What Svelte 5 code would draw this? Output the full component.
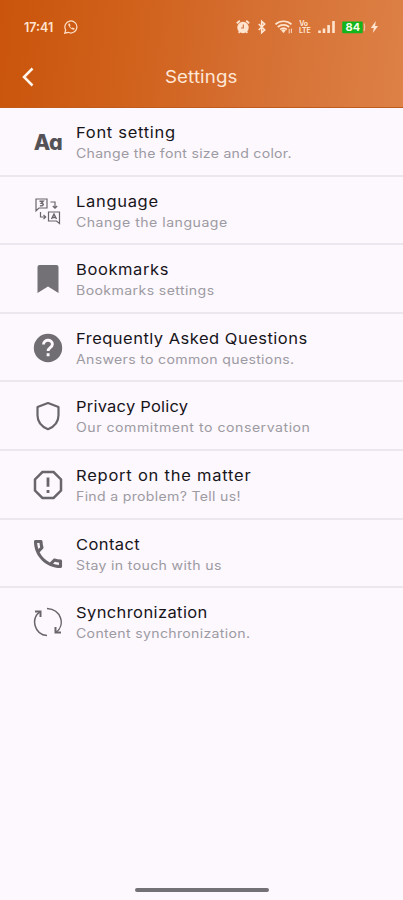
<script>
  const rows = [
    { icon: 'font', title: 'Font setting', text: 'Change the font size and color.', ts: 0.64, ss: 0.26 },
    { icon: 'language', title: 'Language', text: 'Change the language', ts: 0.62, ss: 0.46 },
    { icon: 'bookmark', title: 'Bookmarks', text: 'Bookmarks settings', ts: 0.55, ss: 0.38 },
    { icon: 'help', title: 'Frequently Asked Questions', text: 'Answers to common questions.', ts: 0.44, ss: 0.3 },
    { icon: 'shield', title: 'Privacy Policy', text: 'Our commitment to conservation', ts: 0.2, ss: 0.49 },
    { icon: 'report', title: 'Report on the matter', text: 'Find a problem? Tell us!', ts: 0.7, ss: 0.29 },
    { icon: 'phone', title: 'Contact', text: 'Stay in touch with us', ts: 0.36, ss: 0.33 },
    { icon: 'sync', title: 'Synchronization', text: 'Content synchronization.', ts: 0.36, ss: 0.3 }
  ];
</script>

<div class="screen">
  <header>
    <div class="status">
      <span class="time">17:41</span>
      <svg class="chat" width="14" height="14" viewBox="0 0 14 14" fill="none" stroke="#ffdfc8" stroke-width="1.2"><path d="M.8 13.2 1.700 10a6 6 0 1 1 2.400 2.300Z" /><path d="M4.300 3.800c-.2 2.800 3 6.100 5.800 6l.6-1.400-1.900-1-.9.800C6.900 7.800 6.200 7 5.900 6.300l.6-.8-.8-1.900Z" fill="#ffdfc8" stroke="none" /></svg>
      <div class="indicators">
        <svg width="144" height="18" viewBox="0 0 144 18" fill="none" stroke="#ffe4cf">
          <circle cx="7" cy="9.500" r="5.700" fill="#ffe4cf" stroke="none" />
          <path d="M.8 5.200 3.800 2.700M13.200 5.200l-3-2.500M2.700 14.800l1-1.200M11.300 14.800l-1-1.200" stroke-width="1.800" />
          <path d="M7.300 6.500V10H5.200" stroke="#cf6e39" stroke-width="1.100" />
          <path d="m22.700 6 6 6-3 2.700V3.300l3 2.700-6 6" stroke-width="1.600" />
          <path d="M39.500 6.300a12 12 0 0 1 16 0M41.800 9a8.500 8.500 0 0 1 11.400 0M44.200 11.500a5 5 0 0 1 6.600 0" stroke-width="1.700" />
          <path d="m45.200 12.300 2.300 3 2.300-3a3.500 3.500 0 0 0-4.600 0Z" fill="#ffe4cf" stroke="none" />
          <path d="M53.200 11v4.500M55.400 10.500V15" stroke-width=".9" />
          <path d="M83.500 15v-2.500M88 15v-4.500M92.600 15V7M97.500 15V3" stroke-width="2.600" />
          <rect x="106.200" y="3.500" width="20.500" height="11.800" rx="1" fill="#12b51c" stroke="none" />
          <path d="M128.200 5.500q1 3.500 0 7.500" stroke="#e9c29e" stroke-width="1.200" />
          <path d="m139.800 3-5 6.900h3l-1 5.200 5.300-7h-3Z" fill="#ffe4cf" stroke="none" />
          <g class="tiny"><text x="63.200" y="7.700">Vo</text><text x="63" y="15">LTE</text></g>
          <text class="battery" x="109.500" y="13.300">84</text>
        </svg>
      </div>
    </div>
    <div class="bar">
      <svg class="back" width="12" height="20" viewBox="0 0 12 20" fill="none" stroke="#fff5ec" stroke-width="2.500"><path d="M10.500 1.500 2 10l8.500 8.500" /></svg>
      <h1><span>Settings</span></h1>
    </div>
  </header>

  <main>
    {#each rows as row}
      <section>
        <div class="icon">
          {#if row.icon === 'font'}
            <span class="aa">Aa</span>
          {:else}
            <svg width="30" height="30" viewBox="0 0 30 30" fill="none" stroke="#68666b">
              {#if row.icon === 'language'}
                <g stroke-width="1.200"><path d="M3 3h11v9H6l-3 2.800ZM15.500 16h11v11.500L23.500 25h-8ZM17.500 6h4.500v6M19.800 10l2.200 2.200 2.200-2.200M7.500 16v5h5M10.500 18.800l2.200 2.200-2.200 2.200" /><path d="m18.500 23 2.500-5 2.500 5M19.400 21.500h3.200M6.500 5.300h3.700L8.300 7.300c3 0 2.600 3-1.400 2.500" stroke-width="1.400" /></g>
              {:else if row.icon === 'bookmark'}
                <path d="M4.500 3q0-2 2-2h17q2 0 2 2v26L15 22.500 4.500 29Z" fill="#737175" stroke="none" />
              {:else if row.icon === 'help'}
                <circle cx="15" cy="15" r="14.200" fill="#706e72" stroke="none" /><path d="M10.500 11.500c.2-5.800 9-5.300 8.900-.2-.1 3.500-4.300 3.200-4.300 6.700M15.100 20.200v3" stroke="#fdf7fe" stroke-width="2.900" />
              {:else if row.icon === 'shield'}
                <path d="M15 2 25.500 6v8.200C25.500 21.500 20.500 26 15 28.200 9.500 26 4.500 21.500 4.500 14.200V6Z" stroke-width="2.200" stroke-linejoin="round" />
              {:else if row.icon === 'report'}
                <path d="M9.400 2h11.200L28 9.400v11.200L20.600 28H9.400L2 20.600V9.400Z" stroke-width="2.500" /><path d="M15 7.500v9.300M15 20v3" stroke-width="2.800" />
              {:else if row.icon === 'phone'}
                <path transform="translate(-3.700 -3.700) scale(1.560)" d="M6.540 5c.06.890.210 1.760.450 2.590l-1.200 1.200c-.410-1.200-.670-2.470-.760-3.790h1.510m9.860 12.020c.850.240 1.720.390 2.600.450v1.490c-1.320-.090-2.590-.350-3.800-.750l1.200-1.190M7.500 3H4c-.550 0-1 .450-1 1 0 9.390 7.610 17 17 17 .550 0 1-.450 1-1v-3.490c0-.550-.450-1-1-1-1.240 0-2.450-.200-3.570-.570-.100-.040-.210-.050-.310-.050-.260 0-.510.100-.710.290l-2.200 2.200c-2.830-1.450-5.150-3.760-6.590-6.590l2.200-2.200c.280-.280.360-.670.250-1.020C8.700 6.450 8.500 5.250 8.500 4c0-.550-.450-1-1-1z" fill="#68666b" stroke="none" />
              {:else}
                <g stroke-width="1.500"><path d="M14 28.500C1.500 27.500-2.500 12 6.800 4.800M14 1.500C28.500 2.500 32.500 18 23.200 25.200" /><path d="M2 4.500h5.500V10M28 25.500h-5.500V20" stroke-width="2" /></g>
              {/if}
            </svg>
          {/if}
        </div>
        <div class="copy">
          <h2><span style:letter-spacing="{row.ts}px">{row.title}</span></h2>
          <p><span style:letter-spacing="{row.ss}px">{row.text}</span></p>
        </div>
      </section>
    {/each}
  </main>
  <footer><div></div></footer>
</div>

<style>
  :global(body) { margin: 0; background: #fdf7fe; }
  .screen { width: 403px; height: 900px; display: flex; flex-direction: column; overflow: hidden; background: #fdf7fe; font-family: Inter, "Open Sans", sans-serif; }
  header { height: 108px; box-sizing: border-box; flex: none; background: linear-gradient(97deg, #ca540b 0%, #d1641f 38%, #d56e31 60%, #dd8147 100%); border-bottom: 1px solid #c15b1b; }
  .status { display: flex; align-items: center; height: 54px; padding-left: 24px; }
  .time { width: 40px; font-size: 12.500px; font-weight: 600; color: #ffe4cf; }
  .indicators { display: flex; margin-left: 157.500px; }
  .tiny { fill: #ffe4cf; stroke: none; font: 700 7px Inter, sans-serif; letter-spacing: -.3px; }
  .battery { fill: #f5ffe8; stroke: none; font: 700 11px Inter, sans-serif; }
  .bar { height: 45px; display: flex; align-items: center; padding-left: 22px; }
  .back { flex: none; }
  h1 { width: 90px; margin: 0 0 0 131px; font-size: 17px; line-height: 24px; font-weight: 400; color: #ffe8d8; }
  h1 span { letter-spacing: .25px; }
  h1 span, h2 span, p span { display: inline-block; transform: scaleX(1.100); transform-origin: left; }
  main { display: flex; flex-direction: column; flex: none; }
  section { height: 68.650px; box-sizing: border-box; border-bottom: 2px solid #ece7ee; display: flex; }
  section:first-child { height: 68.500px; }
  section:last-child { border-bottom: none; }
  .icon { width: 30px; height: 68px; margin-left: 33px; display: flex; align-items: center; justify-content: center; flex: none; }
  .aa { font: 800 21.500px Inter, "Open Sans", sans-serif; font-feature-settings: "cv11"; color: #555257; letter-spacing: -.5px; }
  .copy { padding: 14px 0 0 13px; white-space: nowrap; }
  h2 { margin: 0; font-size: 15px; line-height: 21px; font-weight: 400; color: #17151a; }
  h1 span { letter-spacing: .1px; }
  p { margin: 0; font-size: 12.800px; line-height: 21px; font-weight: 400; color: #9c9ba2; }
  footer { margin-top: auto; height: 12px; display: flex; justify-content: center; }
  footer div { width: 134px; height: 4px; border-radius: 2px; background: #747176; }
</style>
